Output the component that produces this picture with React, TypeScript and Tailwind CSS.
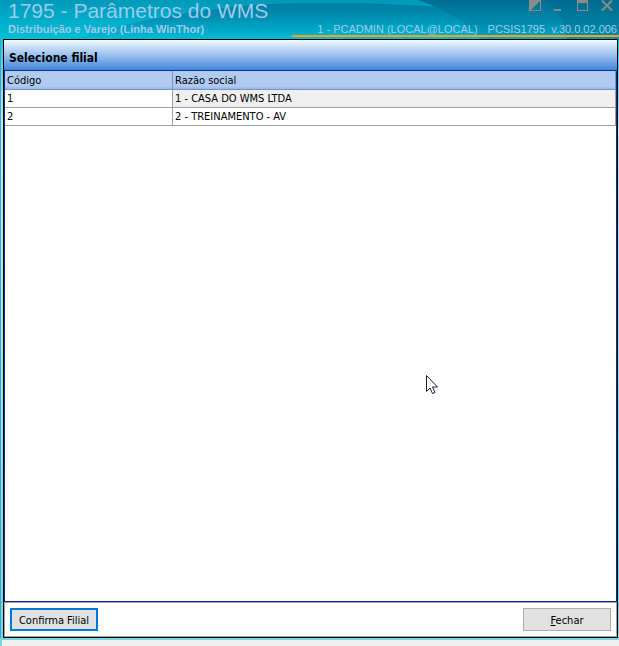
import { useState } from "react";

const rows = [
  { code: "1", name: "1 - CASA DO WMS LTDA" },
  { code: "2", name: "2 - TREINAMENTO - AV" },
];

const windowButton =
  "flex h-3 w-3 items-start justify-center text-[#8b8b86]";

function Backdrop() {
  return (
    <svg
      className="absolute inset-0 h-full w-full"
      viewBox="0 0 619 39"
      preserveAspectRatio="none"
      aria-hidden="true"
    >
      <defs>
        <linearGradient id="sky" x1="0" y1="0" x2="0" y2="1">
          <stop offset="0" stopColor="#0099ba" />
          <stop offset="1" stopColor="#00bfd8" />
        </linearGradient>
        <linearGradient id="swell" gradientUnits="userSpaceOnUse" x1="0" y1="4" x2="0" y2="39">
          <stop offset="0" stopColor="#007da2" />
          <stop offset="0.4" stopColor="#0090b4" />
          <stop offset="1" stopColor="#00bbd6" />
        </linearGradient>
        <linearGradient id="deep" gradientUnits="userSpaceOnUse" x1="0" y1="0" x2="0" y2="39">
          <stop offset="0" stopColor="#006e92" />
          <stop offset="0.6" stopColor="#008bae" />
          <stop offset="1" stopColor="#00a9c8" />
        </linearGradient>
      </defs>
      <rect width="619" height="39" fill="url(#sky)" />
      <path d="M75 39C120 24 190 9 270 4C330 2 400 3 450 8L619 20V39Z" fill="url(#swell)" />
      <path d="M418 0C442 8 464 20 482 39H619V0Z" fill="url(#deep)" />
      <path d="M545 0C558 8 566 24 566 39H619V0Z" fill="#006886" fillOpacity="0.35" />
    </svg>
  );
}

export default function App() {
  const [selected, setSelected] = useState("1");

  return (
    <div className="flex min-h-screen flex-col bg-[#f0f0f0] font-['DejaVu_Sans_Condensed','DejaVu_Sans',sans-serif] text-[11px] text-black">
      <header className="relative h-[39px] shrink-0 overflow-hidden font-['Liberation_Sans',Arial,sans-serif] text-[#9dcaea]">
        <Backdrop />
        <div className="relative flex justify-between pl-2">
          <div>
            <h1 className="text-[21px] leading-[22px]">1795 - Parâmetros do WMS</h1>
            <p className="text-[11px] leading-[14px] font-bold">
              Distribuição e Varejo (Linha WinThor)
            </p>
          </div>
          <div className="flex w-[327px] flex-col">
            <div className="flex h-[22px] justify-end gap-3 pr-1.5">
              <button className={windowButton} aria-label="Recolher">
                <svg viewBox="0 0 12 12" className="h-3 w-3" fill="currentColor">
                  <path d="M0 0H12V11H0ZM11 1V10H2Z" fillRule="evenodd" />
                </svg>
              </button>
              <button className={windowButton} aria-label="Minimizar">
                <svg viewBox="0 0 12 12" className="h-3 w-3" fill="currentColor">
                  <path d="M1 9H8V11H1Z" />
                </svg>
              </button>
              <button className={windowButton} aria-label="Maximizar">
                <svg viewBox="0 0 12 12" className="h-3 w-3" fill="currentColor">
                  <path d="M0 0H11V11H0ZM1 3V10H10V3Z" fillRule="evenodd" />
                </svg>
              </button>
              <button className={windowButton} aria-label="Fechar janela">
                <svg viewBox="0 0 12 12" className="h-3 w-3" fill="none" stroke="currentColor" strokeWidth="2">
                  <path d="M1 0.5L11 10.5M11 0.5L1 10.5" />
                </svg>
              </button>
            </div>
            <p className="flex h-[15px] justify-end gap-2.5 border-b-2 border-[#f7a11b] pr-0.5 text-[11px] leading-[14px] whitespace-nowrap">
              <span>1 - PCADMIN (LOCAL@LOCAL)</span>
              <span>PCSIS1795&nbsp; v.30.0.02.006</span>
            </p>
          </div>
        </div>
      </header>

      <div className="flex grow flex-col border-l border-[#35a9c8] bg-linear-to-b from-[#00c4dc] via-[#c4ecf6] via-15% to-[#70d8e4] pr-px pl-0.5">
        <main className="flex grow flex-col border border-black bg-white">
          <h2 className="h-[30px] bg-linear-to-b from-[#f4f9fd] to-[#3f87d9] pl-[5px] text-[12px] leading-[36px] font-bold">
            Selecione filial
          </h2>
          <div className="grow border border-[#0a2f96]">
            <table className="w-full table-fixed border-separate border-spacing-0 text-left leading-[16px]">
              <colgroup>
                <col className="w-[168px]" />
                <col />
              </colgroup>
              <thead>
                <tr className="bg-linear-to-b from-[#b0caf0] from-80% to-[#8fb0e2]">
                  <th className="h-[19px] border-r border-b border-[#6f95d2] p-0 pt-0.5 pl-0.5 font-normal">Código</th>
                  <th className="h-[19px] border-r border-b border-[#6f95d2] p-0 pt-0.5 pl-0.5 font-normal">Razão social</th>
                </tr>
              </thead>
              <tbody>
                {rows.map((row) => (
                  <tr key={row.code} onClick={() => setSelected(row.code)}>
                    <td className="h-[18px] border-r border-b border-[#a0a0a0] p-0 pt-px pl-0.5">{row.code}</td>
                    <td
                      className={
                        selected === row.code
                          ? "h-[18px] border-r border-b border-[#a0a0a0] bg-[#f0f0f0] p-0 pt-px pl-0.5"
                          : "h-[18px] border-r border-b border-[#a0a0a0] p-0 pt-px pl-0.5"
                      }
                    >
                      {row.name}
                    </td>
                  </tr>
                ))}
              </tbody>
            </table>
          </div>
          <footer className="flex justify-between border border-[#a0a0a0] px-[5px] py-[5px]">
            <button className="h-[23px] w-[88px] border-2 border-[#0078d7] bg-[#e1e1e1] pt-0.5 leading-[17px]">
              Confirma Filial
            </button>
            <button className="h-[23px] w-[88px] border border-[#adadad] bg-[#e1e1e1] pt-0.5 leading-[17px]">
              <span className="underline">F</span>echar
            </button>
          </footer>
        </main>
      </div>
      <div className="h-2 shrink-0 border-t-2 border-l-2 border-[#70d8e4] bg-[#f0f0f0]" />

      <svg
        className="pointer-events-none absolute top-[375px] left-[426px] h-5 w-3"
        viewBox="0 0 12 20"
        aria-hidden="true"
      >
        <path
          d="M0.5 0.5V16.5L4 13L6.5 18.5L9 17.5L6.5 12H11.5Z"
          fill="white"
          stroke="#251d45"
        />
      </svg>
    </div>
  );
}
